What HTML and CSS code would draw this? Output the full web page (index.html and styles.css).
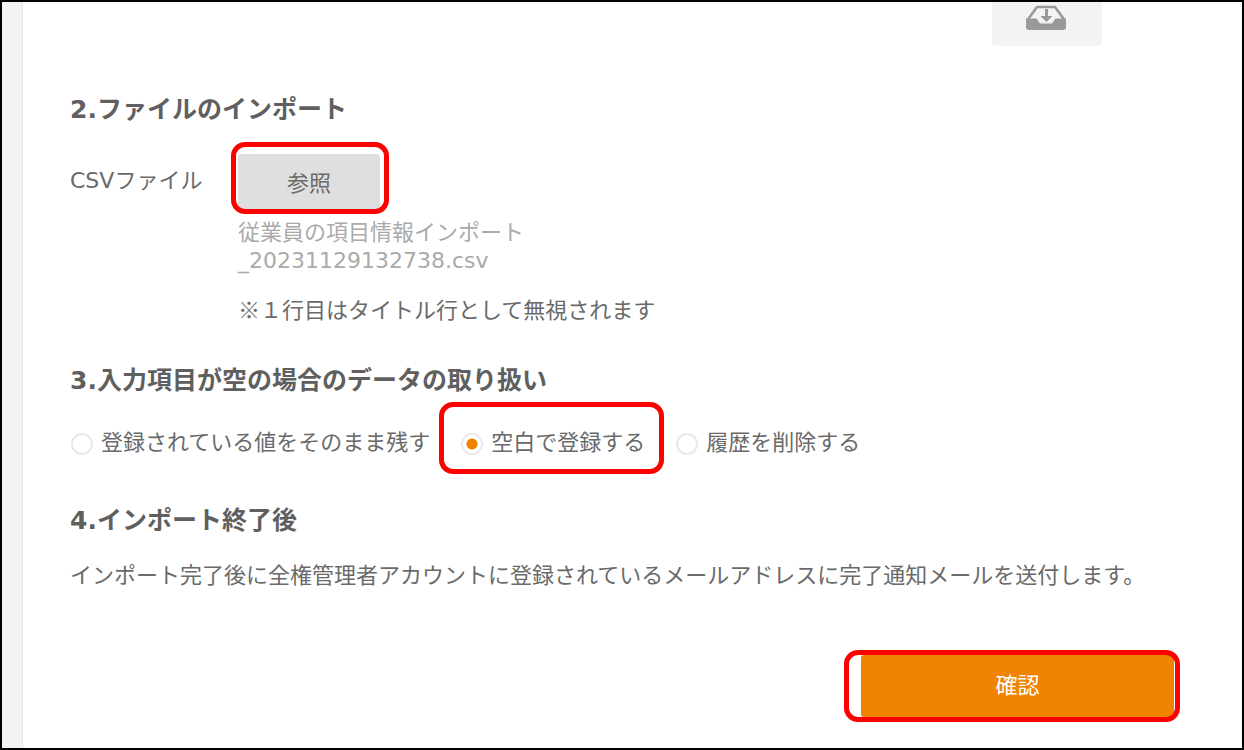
FILE: index.html
```html
<!DOCTYPE html>
<html lang="ja">
	<head>
		<meta charset="utf-8">
		<title>インポート</title>
		<link rel="stylesheet" href="styles.css">
	</head>

	<body>
		<div class="page">
			<div class="side"></div>

			<form class="content">
				<button type="button" class="download" aria-label="ダウンロード">
					<svg width="40" height="26" viewBox="0 0 40 26">
						<path d="M1.500 15L11 2h18l9.500 13" fill="none" stroke="#999" stroke-width="2.500" stroke-linejoin="round"/>
						<path d="M0 13.500h10.500l3.500 5h12l3.500-5H40V22q0 3-3 3H3q-3 0-3-3z" fill="#999"/>
						<path d="M19 4h3v7h4.500l-6 6-6-6H19z" fill="#999"/>
					</svg>
				</button>

				<section>
					<h2>2.ファイルのインポート</h2>
					<div class="file-row">
						<label class="file-label" for="browse">CSVファイル</label>
						<div class="file-body">
							<span class="marked marked-browse">
								<button type="button" id="browse" class="browse">参照</button>
							</span>
							<p class="file-name">従業員の項目情報インポート<br>_20231129132738.csv</p>
							<p class="note">※１行目はタイトル行として無視されます</p>
						</div>
					</div>
				</section>

				<section>
					<h2>3.入力項目が空の場合のデータの取り扱い</h2>
					<div class="radios">
						<label class="radio"><input type="radio" name="empty">登録されている値をそのまま残す</label>
						<label class="radio marked marked-radio"><input type="radio" name="empty" checked>空白で登録する</label>
						<label class="radio"><input type="radio" name="empty">履歴を削除する</label>
					</div>
				</section>

				<section>
					<h2>4.インポート終了後</h2>
					<p class="after">インポート完了後に全権管理者アカウントに登録されているメールアドレスに完了通知メールを送付します。</p>
				</section>

				<div class="actions">
					<span class="marked marked-confirm">
						<button type="submit" class="confirm">確認</button>
					</span>
				</div>
			</form>
		</div>
	</body>
</html>
```
FILE: styles.css
```css
* {
	box-sizing: border-box;
}

body {
	margin: 0;
	background: #fff;
	color: #6a6a6a;
	font-family: "DejaVu Sans", "Noto Sans CJK JP", sans-serif;
	font-size: 22px;
	line-height: 28px;
}

h2, p {
	margin: 0;
}

h2 {
	font-size: 25px;
	line-height: 28px;
	color: #5f5f5f;
}

button {
	display: block;
	padding: 0;
	border: 0;
	font: inherit;
	color: inherit;
}

.page {
	display: flex;
	min-height: 100vh;
	border: 2px solid #000;
}

.side {
	flex: none;
	width: 21px;
	background: #f3f3f3;
	border-right: 1px solid #e6e6e6;
}

.content {
	flex: 1;
	padding: 0 68px 28px 47px;
}

.download {
	width: 110px;
	height: 44px;
	margin: 0 72px 50px auto;
	padding: 3px 0 0 34px;
	background: #f3f3f3;
	border-radius: 0 0 3px 3px;
}

.download svg {
	display: block;
	margin-bottom: 15px;
}

/* file import */
.file-row {
	display: flex;
	margin: 30px 0 45px;
}

.file-label {
	flex: none;
	width: 168px;
	padding-top: 13px;
}

.browse {
	width: 142px;
	height: 55px;
	padding-top: 4px;
	background: #dfdfdf;
	border-radius: 3px;
}

.file-name {
	margin-top: 10px;
	color: #aaa;
}

.note {
	margin-top: 19px;
	font-family: "Noto Sans CJK JP", sans-serif;
}

/* empty value handling */
.radios {
	display: flex;
	flex-wrap: wrap;
	gap: 31px;
	margin: 34px 0 50px;
	padding-left: 1px;
}

.radio {
	display: flex;
	align-items: center;
	gap: 8px;
}

.radio input {
	appearance: none;
	width: 22px;
	height: 22px;
	margin: 1px 0 0;
	border: 2px solid #e9e9e9;
	border-radius: 50%;
	background: #fff;
}

.radio input:checked {
	background: radial-gradient(circle, #f08300 5px, #fff 6px);
}

.after {
	margin: 27px 0 65px;
}

.actions {
	display: flex;
	justify-content: flex-end;
}

.confirm {
	width: 313px;
	height: 62px;
	background: #f08300;
	border-radius: 3px;
	color: #fff;
}

/* red callout frames */
.marked {
	position: relative;
}

span.marked {
	display: block;
	width: fit-content;
}

.marked::after {
	content: "";
	position: absolute;
	border: 5px solid #f00;
	border-radius: 14px;
	pointer-events: none;
}

.marked-browse::after {
	inset: -12px -9px -5px -7px;
}

.marked-radio::after {
	inset: -27px -19px -17px -22px;
}

.marked-confirm::after {
	inset: -5px -6px -5px -17px;
}
```
